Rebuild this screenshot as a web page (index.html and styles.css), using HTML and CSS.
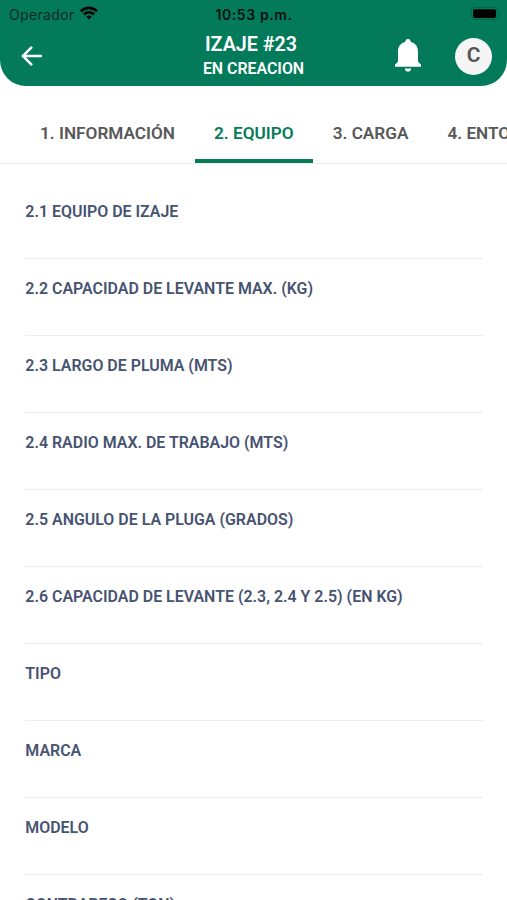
FILE: index.html
```html
<!DOCTYPE html>
<html lang="es">
<head>
<meta charset="utf-8">
<meta name="viewport" content="width=device-width, initial-scale=1">
<title>Izaje #23</title>
<link rel="stylesheet" href="styles.css">
</head>
<body>
<header class="header">
  <div class="status">
    <div class="carrier"><span>Operador</span>
      <svg class="wifi" viewBox="0 0 18 14" width="18" height="14"><g fill="none" stroke="currentColor" stroke-width="2.8"><path d="M.9 5.3C5.5.6 12.500.6 17.100 5.300"/><path d="M3.900 8.500C6.900 5.700 11.100 5.700 14.100 8.500"/></g><path fill="currentColor" d="M6.300 10.500Q9 8.400 11.700 10.500L9 13.500Z"/></svg>
    </div>
    <time class="clock">10:53 p.m.</time>
    <svg class="battery" viewBox="0 0 31 13" width="31" height="13"><rect x=".5" y=".5" width="26" height="12" rx="3.500" fill="none" stroke="#00644a" /><rect x="2" y="2.300" width="23" height="8.600" rx="1.800"/><path d="M28 4.500Q31 6.500 28 8.500Z" fill="#00644a"/></svg>
  </div>
  <div class="toolbar">
    <svg class="back" viewBox="0 0 22 20" width="22" height="20"><path d="M21 10H2M11 .9L1.900 10L11 19.100" fill="none" stroke="#fff" stroke-width="2.500"/></svg>
    <div class="heading"><h1 class="title">IZAJE #23</h1><p class="state">EN CREACION</p></div>
    <div class="actions">
      <svg class="bell" viewBox="0 0 26 33" width="26" height="33"><path fill="#fff" d="M13 0C14.600 0 15.700 1.200 15.700 3C20.500 4.100 23 7.600 23 12.500V21.500Q23 23 24.200 24L26 25.500V27.800H0V25.500L1.800 24Q3 23 3 21.500V12.500C3 7.600 5.500 4.100 10.300 3C10.300 1.200 11.400 0 13 0ZM9.700 29.400H16.300Q15.800 32.500 13 32.500T9.700 29.400Z"/></svg>
      <div class="avatar">C</div>
    </div>
  </div>
</header>
<nav class="tabs">
  <a class="tab">1. INFORMACIÓN</a>
  <a class="tab active">2. EQUIPO</a>
  <a class="tab">3. CARGA</a>
  <a class="tab">4. ENTORNO</a>
</nav>
<main class="fields">
  <div class="field">2.1 EQUIPO DE IZAJE</div>
  <div class="field">2.2 CAPACIDAD DE LEVANTE MAX. (KG)</div>
  <div class="field">2.3 LARGO DE PLUMA (MTS)</div>
  <div class="field">2.4 RADIO MAX. DE TRABAJO (MTS)</div>
  <div class="field">2.5 ANGULO DE LA PLUGA (GRADOS)</div>
  <div class="field">2.6 CAPACIDAD DE LEVANTE (2.3, 2.4 Y 2.5) (EN KG)</div>
  <div class="field">TIPO</div>
  <div class="field">MARCA</div>
  <div class="field">MODELO</div>
  <div class="field">CONTRAPESO (TON)</div>
</main>
</body>
</html>
```

FILE: styles.css
```css
* { box-sizing: border-box; }
body { margin: 0; height: 900px; overflow: hidden; background: #fff; font-family: Roboto, sans-serif; font-weight: 600; }
.header { height: 86px; background: #037b5a; border-radius: 0 0 26px 26px; }
.status { height: 28px; display: grid; grid-template-columns: 1fr auto 1fr; align-items: center; padding: 0 5px 0 9px; font-family: Inter, sans-serif; color: #06110e; }
.carrier { display: flex; align-items: center; gap: 5px; font-size: 14px; font-weight: 400; letter-spacing: .35px; color: #06291f; }
.wifi { color: #000; margin-top: -2px; }
.clock { margin-right: 3px; font-size: 14px; letter-spacing: .6px; }
.battery { justify-self: end; margin-top: -2px; }
.toolbar { height: 56px; display: grid; grid-template-columns: 1fr auto 1fr; align-items: center; padding: 0 15px 0 21px; }
.heading { margin: 0 6px 0 0; text-align: center; color: #fff; }
.title { margin: 0 5px 0 0; font-size: 19.7px; line-height: 25px; font-weight: 600; }
.state { margin: 0; font-size: 15.9px; line-height: 24px; }
.actions { justify-self: end; display: flex; align-items: center; gap: 34px; }
.bell { margin-top: -2px; }
.avatar { width: 37px; height: 37px; border-radius: 50%; background: #f5f5f5; color: #555; font-size: 21px; line-height: 35px; text-align: center; }
.tabs { height: 78px; display: flex; padding-left: 20.5px; border-bottom: 1px solid #ededef; overflow: hidden; }
.tab { flex: none; height: 77px; padding: 0 19.5px; line-height: 94px; font-size: 17.2px; color: #585858; white-space: nowrap; }
.tab.active { color: #057c58; border-bottom: 4px solid #057c58; }
.fields { height: 736px; overflow: hidden; padding: 18.4px 24px 0 25.3px; }
.field { height: 76.96px; padding-top: 19.9px; border-bottom: 1px solid #ededef; color: #475371; font-size: 15.94px; line-height: 20px; white-space: nowrap; }
```
